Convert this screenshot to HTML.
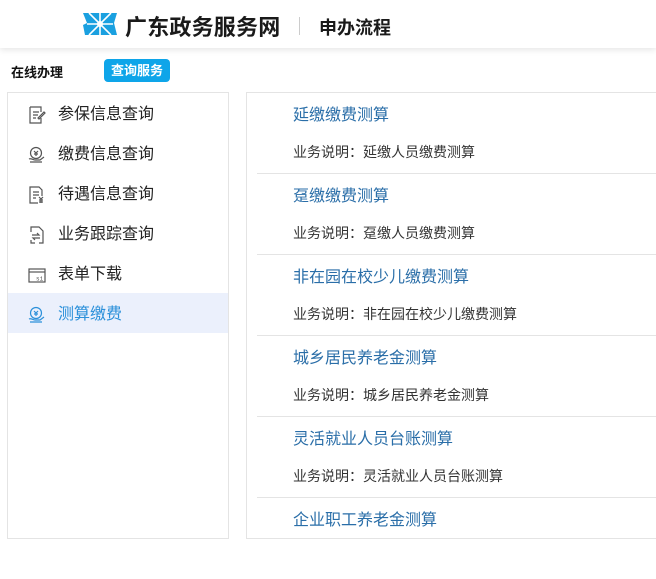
<!DOCTYPE html>
<html><head><meta charset="utf-8"><style>
*{margin:0;padding:0;box-sizing:border-box}
body{width:656px;height:545px;background:#fff;font-family:"Liberation Sans","Noto Sans CJK SC",sans-serif;position:relative;overflow:hidden}
.hdr{position:absolute;left:0;top:0;width:656px;height:48px;background:#fff;box-shadow:0 2px 6px rgba(0,0,0,.1)}
.t1{position:absolute;left:125px;top:10px;font-size:22px;font-weight:bold;color:#1a1a1a;letter-spacing:0.2px}
.div{position:absolute;left:299px;top:17px;width:1px;height:18px;background:#ccc}
.t2{position:absolute;left:319px;top:14px;font-size:18px;font-weight:bold;color:#1a1a1a}
.online{position:absolute;left:11px;top:62px;font-size:13px;font-weight:bold;color:#111}
.badge{position:absolute;left:104px;top:59px;width:66px;height:23px;background:#0ea5e9;border-radius:4px;color:#fff;font-size:13px;font-weight:bold;text-align:center;line-height:23px}
.left{position:absolute;left:7px;top:92px;width:222px;height:447px;border:1px solid #e4e4e4}
.li{position:absolute;left:0;width:220px;height:40px;font-size:16px;color:#222;line-height:40px;padding-left:50px;padding-top:2px}
.li svg{position:absolute;left:20px;top:13px}
.li.act{background:#ebf0fc;color:#2b90da}
.right{position:absolute;left:246px;top:92px;width:420px;height:447px;border:1px solid #e4e4e4}
.it{position:absolute;left:10px;width:420px;height:81px;border-bottom:1px solid #e4e4e4}
.it .a{position:absolute;left:36px;top:8px;font-size:16px;color:#2a6ea8}
.it .b{position:absolute;left:36px;top:49px;font-size:14px;color:#333}
</style></head><body>
<div class="hdr">
<svg style="position:absolute;left:83px;top:13px" width="34" height="22" viewBox="0 0 34 22">
<polygon points="0,0 34,0 31,10 34,22 2,22 0,12 4,10" fill="#1aa0e0"/>
<g stroke="#fff" stroke-width="1.6"><line x1="17" y1="0" x2="17" y2="22"/><line x1="6" y1="0" x2="28" y2="22"/><line x1="28" y1="0" x2="6" y2="22"/><line x1="4" y1="11" x2="30" y2="11"/></g>
<circle cx="17" cy="11" r="3" fill="#fff"/></svg>
<div class="t1">广东政务服务网</div><div class="div"></div><div class="t2">申办流程</div>
</div>
<div class="online">在线办理</div><div class="badge">查询服务</div>
<div class="left">
<div class="li" style="top:0"><svg width="18" height="18" viewBox="0 0 18 18" fill="none" stroke="#555" stroke-width="1.2"><path d="M2 1h11v5M13 12v5H2V1"/><path d="M5 6h6M5 9h5M5 12h3"/><path d="M10 12l6-6 1 1-6 6z"/></svg>参保信息查询</div>
<div class="li" style="top:40px"><svg width="18" height="18" viewBox="0 0 18 18" fill="none" stroke="#555" stroke-width="1.2"><circle cx="8" cy="7" r="5.5"/><path d="M6 5l2 2 2-2M8 7v3M6 8h4"/><path d="M1 13c2-1 4 1 6 1h5l4-3M2 16h12"/></svg>缴费信息查询</div>
<div class="li" style="top:80px"><svg width="18" height="18" viewBox="0 0 18 18" fill="none" stroke="#555" stroke-width="1.2"><path d="M10 17H2V1h9l3 3v6"/><path d="M5 6h6M5 9h6M5 12h3"/><path d="M11 11l2 2 2-2M13 13v4M11 14h4M11 16h4"/></svg>待遇信息查询</div>
<div class="li" style="top:120px"><svg width="18" height="18" viewBox="0 0 18 18" fill="none" stroke="#555" stroke-width="1.2"><path d="M3 6V1h8l4 4v12h-4M7 17H3v-3"/><path d="M4 9h7l-2-2M12 12H5l2 2"/></svg>业务跟踪查询</div>
<div class="li" style="top:160px"><svg width="18" height="18" viewBox="0 0 18 18" fill="none" stroke="#555" stroke-width="1.2"><rect x="1" y="3" width="16" height="13"/><path d="M1 6h16"/><text x="8" y="14.5" font-size="6" fill="#555" stroke="none" font-family="Liberation Mono">si</text></svg>表单下载</div>
<div class="li act" style="top:200px"><svg width="18" height="18" viewBox="0 0 18 18" fill="none" stroke="#2b90da" stroke-width="1.2"><circle cx="8" cy="7" r="5.5"/><path d="M6 5l2 2 2-2M8 7v3M6 8h4"/><path d="M1 13c2-1 4 1 6 1h5l4-3M2 16h12"/></svg>测算缴费</div>
</div>
<div class="right">
<div class="it" style="top:0"><div class="a">延缴缴费测算</div><div class="b">业务说明：延缴人员缴费测算</div></div>
<div class="it" style="top:81px"><div class="a">趸缴缴费测算</div><div class="b">业务说明：趸缴人员缴费测算</div></div>
<div class="it" style="top:162px"><div class="a">非在园在校少儿缴费测算</div><div class="b">业务说明：非在园在校少儿缴费测算</div></div>
<div class="it" style="top:243px"><div class="a">城乡居民养老金测算</div><div class="b">业务说明：城乡居民养老金测算</div></div>
<div class="it" style="top:324px"><div class="a">灵活就业人员台账测算</div><div class="b">业务说明：灵活就业人员台账测算</div></div>
<div class="it" style="top:405px;border-bottom:none"><div class="a">企业职工养老金测算</div></div>
</div>
</body></html>
